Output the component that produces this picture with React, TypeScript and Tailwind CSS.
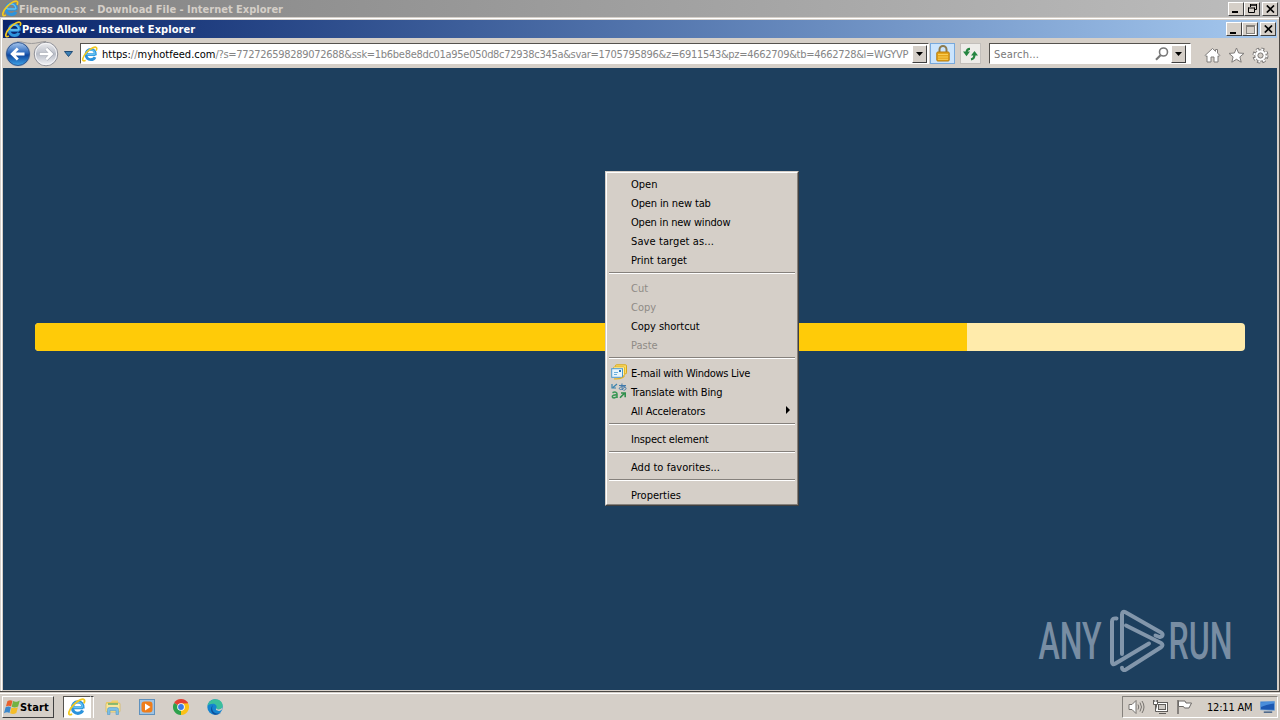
import type { ReactNode } from 'react';

const uiFont = "font-['DejaVu_Sans_Condensed','DejaVu_Sans',sans-serif]";
const raised = 'border border-t-white border-l-white border-r-[#404040] border-b-[#404040]';
const sunken = 'border border-t-[#55524e] border-l-[#55524e] border-r-white border-b-white';

type MenuEntry = {
  label: string;
  tracking?: string;
  disabled?: boolean;
  icon?: 'mail' | 'translate';
  submenu?: boolean;
};

const menuGroups: MenuEntry[][] = [
  [
    { label: 'Open' },
    { label: 'Open in new tab', tracking: 'tracking-[-0.12px]' },
    { label: 'Open in new window', tracking: 'tracking-[-0.2px]' },
    { label: 'Save target as...', tracking: 'tracking-[0.1px]' },
    { label: 'Print target' },
  ],
  [
    { label: 'Cut', disabled: true },
    { label: 'Copy', disabled: true },
    { label: 'Copy shortcut', tracking: 'tracking-[-0.05px]' },
    { label: 'Paste', disabled: true },
  ],
  [
    { label: 'E-mail with Windows Live', tracking: 'tracking-[-0.28px]', icon: 'mail' },
    { label: 'Translate with Bing', tracking: 'tracking-[-0.15px]', icon: 'translate' },
    { label: 'All Accelerators', tracking: 'tracking-[-0.17px]', submenu: true },
  ],
  [{ label: 'Inspect element', tracking: 'tracking-[-0.17px]' }],
  [{ label: 'Add to favorites...', tracking: 'tracking-[0.04px]' }],
  [{ label: 'Properties' }],
];

const IeIcon = ({ className }: { className: string }) => (
  <svg viewBox="0 0 16 16" className={className} fill="none">
    <path
      d="M13.4 8.700H4.800M13.400 9.200C13.600 5.500 11.800 3.400 8.800 3.400S4 5.600 4 8.600s1.900 5 4.800 5c2 0 3.500-.9 4.200-2.500"
      stroke="#2c93dc"
      strokeWidth="2.8"
    />
    <path
      d="M12.800 8.500H5M13 8.500C13 5.700 11.400 3.800 8.800 3.800S4.300 5.800 4.300 8.500"
      stroke="#62c2f2"
      strokeWidth="1.3"
    />
    <path
      d="M3.600 14.200C1.500 15.500.3 14.700.9 12.400 1.800 8.900 6.200 3.700 10.800 1.700c2.600-1.100 4.200-.7 3.900 1.200-.1.600-.3 1.200-.6 1.800"
      stroke="#f2c81f"
      strokeWidth="1.6"
    />
  </svg>
);

const BackForward = () => (
  <svg width="58" height="28" viewBox="0 0 58 28" fill="none">
    <defs>
      <linearGradient id="back" x1="0" y1="0" x2="0" y2="1">
        <stop offset="0" stopColor="#a9c8ee" />
        <stop offset=".45" stopColor="#2c68bc" />
        <stop offset=".55" stopColor="#0e469e" />
        <stop offset="1" stopColor="#3fa4e8" />
      </linearGradient>
      <linearGradient id="forward" x1="0" y1="0" x2="0" y2="1">
        <stop offset="0" stopColor="#eeeef0" />
        <stop offset=".5" stopColor="#b9bdc7" />
        <stop offset="1" stopColor="#f4f5f8" />
      </linearGradient>
    </defs>
    <path d="M14 1.500c5 0 9 2 14.500 2S38 1.500 43 1.500" stroke="#9c9a9a" />
    <circle cx="15" cy="14" r="12.500" fill="#b7bac2" />
    <circle cx="15" cy="14" r="11.500" fill="url(#back)" stroke="#32578f" />
    <circle cx="43" cy="14" r="11.800" fill="url(#forward)" stroke="#92939a" />
    <circle cx="43" cy="14" r="10.600" stroke="#f5f5f7" />
    <path d="M21.500 14H9.500M14.800 8.500 9.200 14l5.600 5.500" stroke="#fff" strokeWidth="2.8" />
    <path d="M36.500 14h12M43.200 8.500l5.600 5.500-5.600 5.500" stroke="#a7abb5" strokeWidth="3.800" />
    <path d="M36.800 14h11.400M43.200 8.700l5.400 5.300-5.400 5.300" stroke="#fff" strokeWidth="2.500" />
  </svg>
);

const CaptionButton = ({ children, className = '' }: { children: ReactNode; className?: string }) => (
  <div className={`flex h-[14px] w-4 items-center justify-center bg-[#d5cfc8] ${raised} ${className}`}>
    {children}
  </div>
);

const MinimizeGlyph = () => <div className="mt-[7px] mr-[3px] h-[2px] w-[6px] bg-black" />;

const CloseGlyph = () => (
  <svg width="9" height="8" viewBox="0 0 9 8" stroke="#000" strokeWidth="1.7">
    <path d="M.8.5 8 7.500M8 .5.8 7.500" />
  </svg>
);

const DropButton = ({ className = '' }: { className?: string }) => (
  <div className={`flex w-[15px] shrink-0 items-center justify-center bg-[#d5cfc8] ${raised} ${className}`}>
    <svg width="7" height="4" viewBox="0 0 7 4">
      <path d="M0 0h7L3.500 4z" />
    </svg>
  </div>
);

const MailIcon = () => (
  <svg width="16" height="16" viewBox="0 0 16 16" fill="none">
    <rect x="4.500" y=".8" width="11" height="9" rx="1" fill="#f9dc68" stroke="#d9a718" />
    <rect x="2.500" y="2.800" width="11" height="9" rx="1" fill="#fff0a8" stroke="#e0b52f" />
    <rect x=".7" y="4.700" width="10.800" height="8.600" fill="#e6f4fc" stroke="#4a98cf" />
    <path d="M3 8.500h4M3 10.500h3" stroke="#6caedb" />
    <rect x="8" y="6" width="2" height="2" fill="#2777bd" />
    <path d="M3 14.800c5 .4 9-.3 10.500-3" stroke="#e4b324" strokeWidth="1.200" />
  </svg>
);

const TranslateIcon = () => (
  <svg width="16" height="16" viewBox="0 0 16 16" fill="none">
    <path d="M1 1v4.500M1 5h4M6 1 2 4.500" stroke="#3b83ae" strokeWidth="1.200" />
    <path
      d="M8 2.500h7M11 .5c-.3 3 0 5 .8 6.500M14 3.200c-1 3-5.500 4.600-5.700 2.200C8.300 3.500 15 2.700 15 5.400c0 1.200-1 1.800-2.500 1.900"
      stroke="#4179aa"
    />
    <path
      d="M1.500 9.700c2.500-1.300 4.500-.6 4.500 1.300v4M6 12c-3-.4-4.800.3-4.700 1.600C1.400 15.200 4.500 15.500 6 13.400"
      stroke="#3c9857"
      strokeWidth="1.600"
    />
    <path d="M9 14.800 13.500 10.300M10 10h4.200v4.200" stroke="#2f8f4b" strokeWidth="1.600" />
  </svg>
);

const MenuItem = ({ label, tracking = '', disabled, icon, submenu }: MenuEntry) => (
  <div className="flex h-[19px] items-center pr-[6px] pl-[3px]">
    <div className="-mt-px w-[20px]">
      {icon === 'mail' && <MailIcon />}
      {icon === 'translate' && <TranslateIcon />}
    </div>
    <span className={`grow pt-[3px] ${tracking} ${disabled ? 'text-[#8f8b86]' : 'text-black'}`}>{label}</span>
    {submenu && (
      <svg width="4" height="8" viewBox="0 0 4 8" className="-mt-px">
        <path d="M0 0v8l4-4z" />
      </svg>
    )}
  </div>
);

const ContextMenu = () => (
  <div className="absolute top-[103px] left-[602px] w-[194px] border border-t-[#d5cfc8] border-r-[#404040] border-b-[#404040] border-l-[#d5cfc8] bg-[#d5cfc8] text-[11px]">
    <div className="border border-t-white border-r-[#85817c] border-b-[#85817c] border-l-white px-px pt-px">
      {menuGroups.map((group, i) => (
        <div key={group[0].label}>
          {i > 0 && (
            <div className="h-[9px] px-px pt-[3px]">
              <div className="h-[2px] border-t border-b border-t-[#85817c] border-b-white" />
            </div>
          )}
          {group.map((item) => (
            <MenuItem key={item.label} {...item} />
          ))}
        </div>
      ))}
    </div>
  </div>
);

const Watermark = () => (
  <svg
    width="200"
    height="70"
    viewBox="0 0 200 70"
    className="absolute right-[42px] bottom-[14px] overflow-visible font-['Roboto',sans-serif]"
    fill="none"
  >
    <g fill="#788da3" fontSize="52" fontWeight="500">
      <text x="3.500" y="53" textLength="63" lengthAdjust="spacingAndGlyphs">ANY</text>
      <text x="133.500" y="53" textLength="64" lengthAdjust="spacingAndGlyphs">RUN</text>
    </g>
    <g stroke="#8296ab" strokeWidth="4" strokeLinejoin="round" strokeLinecap="round">
      <path d="M81.500 12.500c-3-.5-4.500.5-4.500 3V56c0 2 1.200 2.800 3 1.800L114 37.500" />
      <path d="M87 48V8.500c0-2.500 1.500-3.300 3.500-2.200L126 26.500c2.800 1.800 1.500 5-1.500 4.500l-4-1.500" />
      <path d="M91 19.500 126 37c2 1.200 2 3 0 4.300L91 63.500c-2 1.200-4 .5-4-1.700" />
    </g>
  </svg>
);

const AddressBar = () => (
  <div className={`flex h-[21px] w-[849px] items-center bg-white pr-px pl-px ${sunken}`}>
    <IeIcon className="size-4 shrink-0" />
    <div className="ml-[4px] grow pt-[3px] text-[11px] whitespace-nowrap text-[#858585]">
      <span className="text-black">https:</span>//<span className="text-black">myhotfeed.com</span>
      <span className="tracking-[-0.295px]">
        /?s=772726598289072688&amp;ssk=1b6be8e8dc01a95e050d8c72938c345a&amp;svar=1705795896&amp;z=6911543&amp;pz=4662709&amp;tb=4662728&amp;l=WGYVP
      </span>
    </div>
    <DropButton className="h-[18px]" />
  </div>
);

const ToolbarIcons = () => (
  <div className="mt-[3px] ml-[13px] flex items-center gap-[7px]">
    <svg width="17" height="17" viewBox="0 0 17 17" fill="#fff" stroke="#7f7c7a">
      <path d="M1 8.500 8.500 1.500 11.500 4.300V2.500h2v3.700L16 8.500l-1 1-1-.7V15h-4v-5H7v5H3V8.800l-1 .7z" />
    </svg>
    <svg width="17" height="17" viewBox="0 0 17 17" fill="#fff" stroke="#7f7c7a">
      <path d="m8.500 1 2.100 5 5.400.4-4.100 3.500 1.300 5.300-4.700-2.900-4.700 2.900 1.300-5.300L1 6.400 6.400 6z" />
    </svg>
    <svg width="17" height="17" viewBox="0 0 17 17" fill="none">
      <circle cx="8.500" cy="8.500" r="6.300" stroke="#7a7775" strokeWidth="3.400" strokeDasharray="2.900 2.050" />
      <circle cx="8.500" cy="8.500" r="5.700" fill="#fff" stroke="#7a7775" />
      <circle cx="8.500" cy="8.500" r="6.100" stroke="#fff" strokeWidth="2" strokeDasharray="1.900 2.900" />
      <circle cx="8.500" cy="8.500" r="2.600" fill="#d5cfc8" stroke="#7a7775" />
    </svg>
  </div>
);

const Toolbar = () => (
  <div className="flex h-[30px] shrink-0 items-center bg-[#d5cfc8] pt-px">
    <BackForward />
    <svg width="9" height="6" viewBox="0 0 9 6" className="mr-[7px] ml-[3px]">
      <path d="M.5.500h8L4.500 5.500z" fill="#3b80b5" stroke="#204d78" />
    </svg>
    <AddressBar />
    <div className="ml-px flex h-[21px] w-[25px] items-center justify-center border border-[#78a9dc] bg-[#cbe4fc]">
      <svg width="14" height="17" viewBox="0 0 14 17" fill="none">
        <path d="M3.500 8V4.500a3.500 3.500 0 0 1 7 0V8" stroke="#8c7b50" strokeWidth="2" />
        <rect x=".8" y="7" width="12.400" height="9" rx="1" fill="#e6a519" stroke="#b67a0c" />
        <path d="M2 9.500h10M2 12h10M2 14.300h10" stroke="#f8ce58" />
      </svg>
    </div>
    <div className="ml-[5px] flex h-[21px] w-[21px] items-center justify-center border border-[#c3bfbb] bg-[#eeece9]">
      <svg width="15" height="14" viewBox="0 0 15 14" fill="#258541">
        <path d="M7 1.800C4.800 1.800 3.600 3 3.600 5.500M11.400 8c0 2.500-1.200 4-3.400 4.300" fill="none" stroke="#258541" strokeWidth="2.200" />
        <path d="M0 4.600h7L3.500 9.200zM8 8.500h7l-3.500-4.600z" />
      </svg>
    </div>
    <div className={`ml-[8px] flex h-[21px] w-[202px] items-center bg-white pr-[4px] pl-[4px] ${sunken}`}>
      <span className="grow pt-[3px] text-[11px] tracking-[0.2px] text-[#777]">Search...</span>
      <svg width="14" height="14" viewBox="0 0 14 14" fill="none" className="mr-[2px]" stroke="#777">
        <circle cx="8.500" cy="5" r="4" strokeWidth="1.600" />
        <path d="M5.500 8.200 1 12.700" strokeWidth="2.200" />
      </svg>
      <DropButton className="h-[18px]" />
    </div>
    <ToolbarIcons />
  </div>
);

const StartFlag = () => (
  <svg width="16" height="16" viewBox="0 0 16 16">
    <path d="M3.500 2C5.500.8 7 1 8.500 1.800L7.100 7.500C5.200 6.600 3.800 6.600 1.900 7.600z" fill="#e8602c" />
    <path d="M9.100 2.100c2 .9 4 .9 6.700-.6L14.100 7.500c-2.300 1.200-4.300 1.200-6.400.3z" fill="#73b243" />
    <path d="M1.600 8.300c2-1 3.600-1 5.300-.1L5.500 13.900C3.800 13 2 13 0 14.200z" fill="#3a87cc" />
    <path d="M7.500 8.500c2 .8 4.100.8 6.400-.3L12.300 14.100c-2.200 1.100-4.200 1.100-6.200.2z" fill="#f5bd28" />
  </svg>
);

const Taskbar = () => (
  <div className="flex h-[27px] items-center border-t border-white bg-[#d5cfc8] pr-[2px] pl-[2px]">
    <div className={`flex h-[22px] w-[52px] items-center pl-px ${raised}`}>
      <StartFlag />
      <span className="pt-[2px] text-[11px] font-bold tracking-[0.15px]">Start</span>
    </div>
    <div className={`ml-[9px] flex h-[22px] w-[28px] items-center justify-center bg-white ${sunken}`}>
      <IeIcon className="size-[18px]" />
    </div>
    <div className="h-[22px] w-[3px] border-t border-r border-t-[#404040] border-r-white" />
    <svg width="16" height="16" viewBox="0 0 16 16" className="ml-[11px]">
      <path d="M1 3h5l1-1.500h6V5H1z" fill="#efd06a" />
      <rect x="1" y="4" width="14" height="9" rx="1" fill="#f9e69b" stroke="#d7b451" strokeWidth=".7" />
      <path d="M3 5h10" stroke="#5da962" strokeWidth="1.400" />
      <path
        d="M2.500 15.500v-5q0-2 2-2h7q2 0 2 2v5h-2.500v-4H5v4z"
        fill="#7bbfe5"
        stroke="#5599c7"
        strokeWidth=".6"
      />
    </svg>
    <svg width="16" height="16" viewBox="0 0 16 16" className="ml-[18px]">
      <rect x=".5" y=".5" width="15" height="15" fill="#9fc3e3" stroke="#5f91bd" />
      <rect x="2.500" y="2.500" width="11" height="11" rx="3" fill="#ef7d1a" />
      <path d="M6 4.500v7L11.500 8z" fill="#fff" />
    </svg>
    <svg width="16" height="16" viewBox="0 0 16 16" className="ml-[18px]">
      <path d="M8 8 1.070 4A8 8 0 0 1 14.930 4z" fill="#e34133" />
      <path d="M8 8 14.930 4A8 8 0 0 1 8 16z" fill="#fbc116" />
      <path d="M8 8v8A8 8 0 0 1 1.070 4z" fill="#2da14c" />
      <path d="M8 4.300h6.900L11.300 9.800z" fill="#fbc116" />
      <path d="M8 4.300h7.050L14.500 3.300 8 2z" fill="#e34133" />
      <circle cx="8" cy="8" r="3.800" fill="#fff" />
      <circle cx="8" cy="8" r="2.900" fill="#3b7be6" />
    </svg>
    <svg width="16" height="16" viewBox="0 0 16 16" className="ml-[18px]">
      <circle cx="8" cy="8" r="7.700" fill="#1584cf" />
      <path
        d="M.5 7C1.500 2.500 4.500.3 8.300.3c4.400 0 7.400 3 7.400 6.200 0 2.500-2 4-4.200 4-1.500 0-2.500-.6-2.200-1.400 1-1.700-.3-4.300-3.300-4.300C3.500 4.800 1.500 5.500.5 7z"
        fill="#3bbf9c"
      />
      <path d="M6 6c-2 3-.5 7.500 3.500 8.500 2 .4 4-.2 5-1.500-1.500 2-4 3-6.500 2.700C4 15 2.500 9 6 6z" fill="#0d4f9c" />
      <path d="M9.300 9.100c-.3.800.7 1.400 2.200 1.400 1.600 0 3-.7 3.700-1.900.3 2-1 3.300-3 3.400-2.700.1-4-1.600-2.900-2.900z" fill="#d5cfc8" />
    </svg>
    <div className="ml-auto flex h-[22px] w-[156px] items-center border border-t-[#85817c] border-r-white border-b-white border-l-[#85817c] pl-[5px]">
      <svg width="17" height="16" viewBox="0 0 17 16" fill="#fff" stroke="#77736f">
        <path d="M1 5.500h3l4-4v13l-4-4H1z" />
        <path d="M10 5.500q1.500 2.500 0 5M12 3.500q3 4.500 0 9M14 2q4 6 0 12" fill="none" />
      </svg>
      <svg width="17" height="16" viewBox="0 0 17 16" fill="#fff" stroke="#5f5c59" className="ml-[7px]">
        <rect x="4.500" y="3.500" width="11" height="9" />
        <rect x="6.500" y="5.500" width="7" height="5" fill="#cdc9c4" />
        <path d="M7 14.500h7M1.500 1v4.500h4V1M3.500 5.500v7h2M2.800 1v2M4.800 1v2" />
      </svg>
      <svg width="17" height="16" viewBox="0 0 17 16" fill="#fff" stroke="#6c6966" className="ml-[7px]">
        <path d="M2 1v14" strokeWidth="1.500" />
        <path d="M2.500 2H9l1 2h5.500l-2.500 5H8.500l-1-1.500h-5z" />
      </svg>
      <span className="ml-[14px] w-[46px] pt-[2px] text-[11px] tracking-[-0.2px] whitespace-nowrap">12:11 AM</span>
      <svg width="15" height="14" viewBox="0 0 16 14" className="ml-[7px]">
        <path d="M.5 1.500 15.500 1v9.500L.5 10z" fill="#1c58b2" stroke="#6ca5de" strokeWidth=".7" />
        <path d="M1 1.800 15 1.300v2Q8 4 1 7z" fill="#4a8edb" />
        <path d="M4 12.500h9" stroke="#3c5b83" strokeWidth="1.500" />
      </svg>
    </div>
  </div>
);

const App = () => (
  <div className={`flex h-[720px] w-[1280px] flex-col overflow-hidden bg-[#d5cfc8] text-black ${uiFont}`}>
    <div className="flex h-[17px] shrink-0 items-center bg-linear-to-r from-[#838383] to-[#bdbdbd] pr-[2px] pl-[2px]">
      <IeIcon className="size-[17px]" />
      <span className="grow pt-[3px] text-[11px] leading-[14px] font-bold text-[#d5cfc8]">
        Filemoon.sx - Download File - Internet Explorer
      </span>
      <CaptionButton><MinimizeGlyph /></CaptionButton>
      <CaptionButton>
        <svg width="9" height="9" viewBox="0 0 9 9" fill="none" stroke="#000">
          <path d="M2.500 1h6M2.500 0v3M8.500 0v5.500H6M2 1h7M0 4h6.500M.5 3.500v5h6v-5" />
        </svg>
      </CaptionButton>
      <CaptionButton className="ml-[2px]"><CloseGlyph /></CaptionButton>
    </div>
    <div className="flex h-[675px] shrink-0 flex-col border-r border-b border-[#4b4845]">
      <div className="flex grow flex-col border-t border-l border-[#d5cfc8]">
        <div className="flex grow flex-col border-t border-l border-white pt-px pr-[2px] pb-px pl-px">
          <div className="flex h-[18px] shrink-0 items-center bg-linear-to-r from-[#0b246b] to-[#a6c9ef] pr-px pl-[2px]">
            <IeIcon className="size-[17px]" />
            <span className="grow pt-[2px] text-[11px] leading-[14px] font-bold tracking-[0.06px] text-white">
              Press Allow - Internet Explorer
            </span>
            <CaptionButton><MinimizeGlyph /></CaptionButton>
            <CaptionButton>
              <div className="h-[9px] w-[9px] border border-t-2 border-[#85817c] shadow-[1px_1px_0_#fff]" />
            </CaptionButton>
            <CaptionButton className="ml-[2px]"><CloseGlyph /></CaptionButton>
          </div>
          <Toolbar />
          <div className="relative flex grow flex-col bg-[#1d3f5e] px-8 pt-[255px]">
            <div className="h-7 overflow-hidden rounded bg-[#ffebab]">
              <div className="h-full w-[932px] bg-[#ffcb08]" />
            </div>
            <ContextMenu />
            <Watermark />
          </div>
        </div>
      </div>
    </div>
    <div className="h-px shrink-0 bg-[#d5cfc8]" />
    <Taskbar />
  </div>
);

export default App;
